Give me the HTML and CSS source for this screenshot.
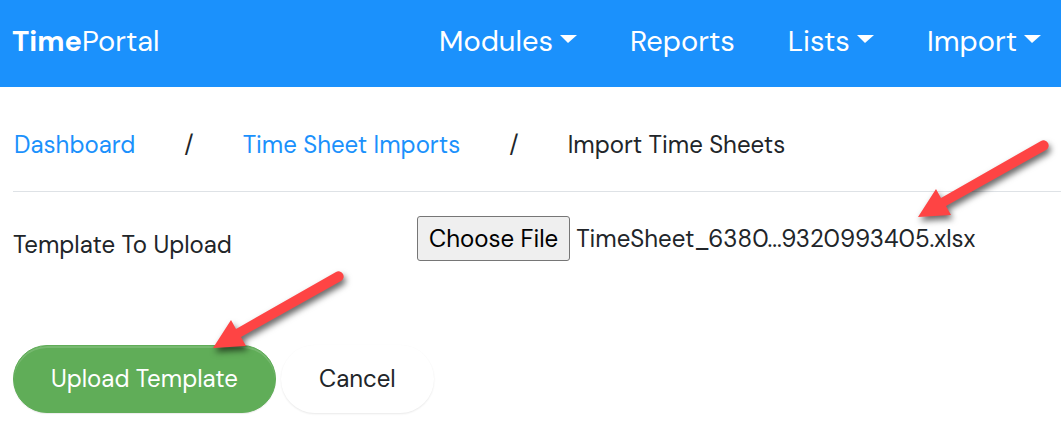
FILE: index.html
```html
<!DOCTYPE html>
<html lang="en">
<head>
<meta charset="utf-8">
<title>TimePortal | Import Time Sheets</title>
<link rel="stylesheet" href="styles.css">
</head>
<body>
<header class="navbar">
  <a class="brand" href="#"><b>Time</b>Portal</a>
  <nav class="nav">
    <a class="nav-link dropdown" href="#">Modules</a>
    <a class="nav-link" href="#">Reports</a>
    <a class="nav-link dropdown" href="#">Lists</a>
    <a class="nav-link dropdown" href="#">Import</a>
  </nav>
</header>

<main class="content">
  <nav class="breadcrumb">
    <a href="#">Dashboard</a>
    <span>/</span>
    <a href="#">Time Sheet Imports</a>
    <span>/</span>
    <span>Import Time Sheets</span>
  </nav>

  <form class="upload-form">
    <div class="form-row">
      <label class="form-label" for="template">Template To Upload</label>
      <div class="file-picker">
        <input class="file-input" type="file" id="template" accept=".xlsx" tabindex="-1">
        <button class="btn-file" type="button">Choose File</button>
        <span class="file-name">TimeSheet_6380...9320993405.xlsx</span>
        <svg class="arrow arrow-file" width="140" height="90" viewBox="0 0 140 90" aria-hidden="true">
          <path d="M5 80 L23 52 L28 61 L128 4 A5 5 0 0 1 133 13 L33 69 L38 78 Z"/>
        </svg>
      </div>
    </div>

    <div class="actions">
      <div class="submit">
        <button class="btn btn-success" type="submit">Upload Template</button>
        <svg class="arrow arrow-submit" width="140" height="90" viewBox="0 0 140 90" aria-hidden="true">
          <path d="M5 80 L23 52 L28 61 L128 4 A5 5 0 0 1 133 13 L33 69 L38 78 Z"/>
        </svg>
      </div>
      <button class="btn btn-light" type="button">Cancel</button>
    </div>
  </form>
</main>

<script>
  const fileInput = document.querySelector('.file-input');
  const fileName = document.querySelector('.file-name');

  document.querySelector('.btn-file').addEventListener('click', function() {
    fileInput.click();
  });

  fileInput.addEventListener('change', function() {
    if (this.files.length) {
      fileName.textContent = this.files[0].name;
    }
  });
</script>
</body>
</html>
```
FILE: styles.css
```css
body {
  margin: 0;
  background-color: #fff;
  color: #212529;
  font-family: "DM Sans", Inter, sans-serif;
  font-size: 24px;
  line-height: 36px;
}

a {
  color: #1b91fc;
  text-decoration: none;
}

.navbar {
  display: flex;
  align-items: center;
  justify-content: space-between;
  background-color: #1b91fc;
  padding: 19px 20px 24px 12px;
}

.brand {
  color: #fff;
  font-size: 29px;
  line-height: 44px;
}

.nav {
  display: flex;
  gap: 53px;
}

.nav-link {
  color: #fff;
  font-size: 29px;
  line-height: 44px;
}

.dropdown::after {
  content: "";
  display: inline-block;
  margin-left: 7px;
  vertical-align: 8px;
  border-top: 8px solid #fff;
  border-left: 8px solid transparent;
  border-right: 9px solid transparent;
}

.content {
  padding-left: 13px;
}

.breadcrumb {
  display: flex;
  gap: 49px;
  padding: 40px 0 28px 1px;
  border-bottom: 1px solid #dee2e6;
}

.form-row {
  display: flex;
  align-items: flex-start;
  padding-top: 24px;
}

.form-label {
  width: 404px;
  padding-top: 11px;
}

.file-picker {
  position: relative;
  display: flex;
  align-items: center;
  gap: 6px;
}

.file-input {
  position: absolute;
  width: 1px;
  height: 1px;
  opacity: 0;
}

.btn-file {
  background-color: #efefef;
  color: #000;
  border: 1px solid #767676;
  border-radius: 3px;
  padding: 4px 11px;
  font: inherit;
  line-height: 35px;
}

.actions {
  display: flex;
  gap: 5px;
  margin-top: 82px;
  padding-bottom: 16px;
}

.submit {
  position: relative;
}

.btn {
  border: 1px solid transparent;
  border-radius: 34px;
  padding: 15px 37px;
  font: inherit;
  cursor: pointer;
}

.btn-success {
  background-color: #60ad58;
  border-color: #60ad58;
  color: #fff;
  box-shadow: inset 0 2px 0 rgba(255, 255, 255, 0.15), 0 1px 1px rgba(0, 0, 0, 0.075);
}

.btn-light {
  background-color: #fff;
  color: #212529;
  box-shadow: 0 1px 2px rgba(0, 0, 0, 0.09);
}

/* pointers over the file name and the submit button */
.arrow {
  position: absolute;
  overflow: visible;
  pointer-events: none;
  fill: #fe4444;
  filter: drop-shadow(2px 4px 3px rgba(0, 0, 0, 0.6));
}

.arrow-file {
  top: -79px;
  left: 496px;
}

.arrow-submit {
  top: -77px;
  left: 195px;
}
```
